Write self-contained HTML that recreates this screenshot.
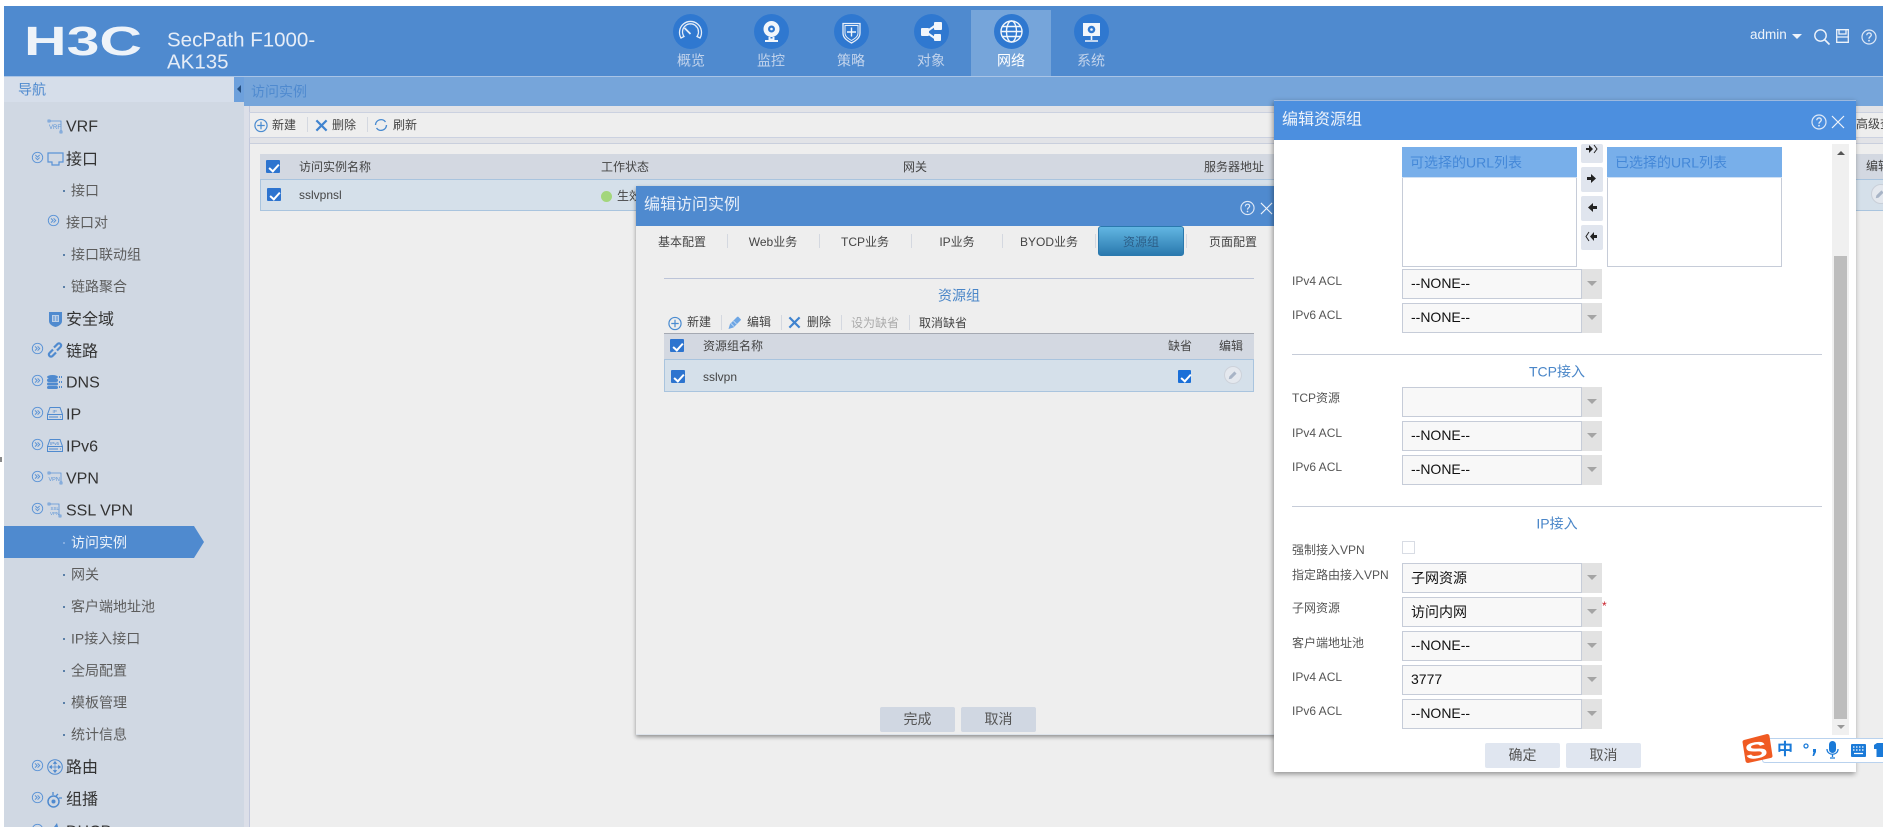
<!DOCTYPE html>
<html lang="zh">
<head>
<meta charset="utf-8">
<title>H3C SecPath F1000-AK135</title>
<style>
html,body{margin:0;padding:0;width:1883px;height:827px;overflow:hidden;background:#fff}
body{position:relative;font-family:"Liberation Sans","Noto Sans CJK SC",sans-serif;color:#555}
div,span,svg{position:absolute;box-sizing:border-box}
svg{display:block;overflow:visible}
.t{white-space:nowrap;transform:translateY(-50%);line-height:1.2}
.c{white-space:nowrap;transform:translate(-50%,-50%);line-height:1.2}
.top{font-size:16px;color:#333}
.sub{font-size:14px;color:#5c5c5c}
.dot{width:2px;height:2px;background:#5a7fa8}
.nl{font-size:14px;color:#c3d4ec}
.s12{font-size:12px;color:#444}
.sep{width:1px;background:#d4d8e0}
.cb{background:#2d74cf;border-radius:1px}
.cb:after{content:"";position:absolute;left:4.5px;top:1.5px;width:4px;height:8px;border:solid #fff;border-width:0 2px 2px 0;transform:rotate(42deg)}
.sel{left:1402px;width:200px;height:30px;background:#f8f8f8;border:1px solid #c6ccd8;border-right:0;font-size:14px;color:#111;line-height:27px;padding-left:8px}
.sel:after{content:"";position:absolute;right:0;top:-1px;width:20px;height:30px;background:#e2e2e2;border-left:1px solid #c6ccd8}
.sel:before{content:"";position:absolute;z-index:2;right:5px;top:11px;border:solid transparent;border-width:5px 5px 0;border-top-color:#a4a4a4}
.lb{left:1292px;font-size:12px;color:#555}
.btn{background:#d0d7e2;border-radius:2px;font-size:14px;color:#555;text-align:center;line-height:25px;height:25px;width:75px}
.ab{left:1581px;width:22px;background:#e0e5ee;border-radius:2px}
.tab{font-size:12px;color:#444}
</style>
</head>
<body>
<svg width="0" height="0" style="position:absolute">
<defs>
<symbol id="r" viewBox="-0.5 -0.5 14 14"><circle cx="6.5" cy="6.5" r="5.6" fill="none" stroke="#5a93d6" stroke-width="1"/><path d="M3.8 4.2l2.3 2.3-2.3 2.3M6.6 4.2l2.3 2.3-2.3 2.3" fill="none" stroke="#5a93d6"/></symbol>
<symbol id="d" viewBox="-0.5 -0.5 14 14"><circle cx="6.5" cy="6.5" r="5.6" fill="none" stroke="#5a93d6" stroke-width="1"/><path d="M4.2 3.8l2.3 2.3 2.3-2.3M4.2 6.6l2.3 2.3 2.3-2.3" fill="none" stroke="#5a93d6"/></symbol>
<symbol id="plus" viewBox="0 0 15 15"><circle cx="7.5" cy="7.5" r="6.5" fill="none" stroke="#4a8bd0" stroke-width="1.3"/><path d="M7.5 3.5v8M3.5 7.5h8" stroke="#4a8bd0" stroke-width="1.3"/></symbol>
<symbol id="x" viewBox="0 0 14 14"><path d="M1.5 1.5l11 11M12.5 1.5l-11 11" stroke="#3f83cf" stroke-width="2.4"/></symbol>
<symbol id="pen" viewBox="0 0 14 14"><path d="M.5 13.500l1.500-5L9 1.500l1-.5 3 3-.5 1-7 7z" fill="#6ea6e4"/><path d="M3 8l3 3M5.500 5.500l3 3" stroke="#cfe0f4" stroke-width=".8"/></symbol>
<symbol id="q" viewBox="0 0 16 16"><circle cx="8" cy="8" r="7" fill="none" stroke="#dfe9f7" stroke-width="1.2"/><path d="M5.8 6.2c0-3 4.5-3 4.5-.2 0 1.700-2.300 1.700-2.300 3.700" fill="none" stroke="#dfe9f7" stroke-width="1.300"/><circle cx="8" cy="11.700" r=".9" fill="#dfe9f7"/></symbol>
<symbol id="cl" viewBox="0 0 14 14"><path d="M1 1l12 12M13 1L1 13" stroke="#eef3fa" stroke-width="1.200"/></symbol>
</defs>
</svg>

<!-- page bg -->
<div style="left:4px;top:6px;width:1879px;height:821px;background:#eeeeee"></div>
<div style="left:0;top:457px;width:2px;height:5px;background:#888"></div>

<!-- header -->
<div style="left:4px;top:6px;width:1879px;height:70px;background:#4f8acf"></div>
<div style="left:4px;top:76px;width:1879px;height:1px;background:#a9c4e6"></div>
<svg style="left:24px;top:27px" width="118" height="28"><text x="0" y="28" textLength="118" lengthAdjust="spacingAndGlyphs" font-family="Liberation Sans,sans-serif" font-weight="700" font-size="41" fill="#eef3f9">H3C</text></svg>
<span class="t" style="left:167px;top:41px;font-size:20.500px;color:#e6edf7">SecPath F1000-</span>
<span class="t" style="left:167px;top:63px;font-size:20.500px;color:#e6edf7">AK135</span>

<!-- top nav -->
<div style="left:971px;top:10px;width:80px;height:66px;background:#76a5da"></div>
<div style="left:673px;top:14px;width:35px;height:35px;border-radius:50%;background:#2f78d0"></div>
<div style="left:754px;top:14px;width:35px;height:35px;border-radius:50%;background:#2f78d0"></div>
<div style="left:834px;top:14px;width:35px;height:35px;border-radius:50%;background:#2f78d0"></div>
<div style="left:914px;top:14px;width:35px;height:35px;border-radius:50%;background:#2f78d0"></div>
<div style="left:994px;top:14px;width:35px;height:35px;border-radius:50%;background:#2f78d0"></div>
<div style="left:1074px;top:14px;width:35px;height:35px;border-radius:50%;background:#2f78d0"></div>
<svg style="left:673px;top:14px" width="35" height="35" viewBox="0 0 35 35"><path d="M8 24a11 11 0 1 1 19 0l-3-1.500a8 8 0 1 0-13 0z" fill="none" stroke="#e5edf8" stroke-width="1.300"/><path d="M17.500 20l-6-6" stroke="#e5edf8" stroke-width="1.800"/><path d="M13 13h.1M17.500 11h.1M22 13h.1M24 17h.1M11 17h.1" stroke="#e5edf8" stroke-width="2"/></svg>
<svg style="left:754px;top:14px" width="35" height="35" viewBox="0 0 35 35"><circle cx="17.500" cy="15" r="8" fill="#f2f6fb"/><circle cx="17.500" cy="15" r="3.500" fill="#2f78d0"/><circle cx="17.500" cy="15" r="1.300" fill="#f2f6fb"/><path d="M15.500 23v2.500h4V23M11 27h13" stroke="#f2f6fb" stroke-width="2" fill="none"/></svg>
<svg style="left:834px;top:14px" width="35" height="35" viewBox="0 0 35 35"><path d="M9 9.500h17v9.500c0 5-4 7.500-8.500 10C13 26.500 9 24 9 19z" fill="none" stroke="#e8eff9" stroke-width="1.300"/><path d="M11 11.500h13v7.500c0 3.500-3 5.500-6.500 7.500C14 24.500 11 22.500 11 19z" fill="#2f78d0" stroke="#e8eff9"/><path d="M17.500 13.500v9M13 18h9" stroke="#f2f6fb" stroke-width="1.400"/></svg>
<svg style="left:914px;top:14px" width="35" height="35" viewBox="0 0 35 35"><path d="M12 18l10-7M12 18l10 7" stroke="#f2f6fb" stroke-width="2"/><rect x="7" y="14" width="8" height="8" rx="1" fill="#f2f6fb"/><rect x="20" y="8" width="8" height="8" rx="1" fill="#f2f6fb"/><rect x="20" y="20" width="7" height="7" rx="1" fill="#f2f6fb"/></svg>
<svg style="left:994px;top:14px" width="35" height="35" viewBox="0 0 35 35"><g fill="none" stroke="#f2f6fb" stroke-width="1.400"><circle cx="17.500" cy="17.500" r="10.500"/><ellipse cx="17.500" cy="17.500" rx="5" ry="10.500"/><path d="M7 17.500h21M8.500 12.500h18M8.500 22.500h18"/></g></svg>
<svg style="left:1074px;top:14px" width="35" height="35" viewBox="0 0 35 35"><rect x="9" y="9" width="17" height="13" fill="#f2f6fb"/><circle cx="17.500" cy="15.500" r="3.800" fill="#2f78d0"/><circle cx="17.500" cy="15.500" r="1.300" fill="#f2f6fb"/><path d="M17.500 22v4M11 27h13" stroke="#f2f6fb" stroke-width="1.600"/></svg>
<span class="c nl" style="left:691px;top:61px">概览</span>
<span class="c nl" style="left:771px;top:61px">监控</span>
<span class="c nl" style="left:851px;top:61px">策略</span>
<span class="c nl" style="left:931px;top:61px">对象</span>
<span class="c nl" style="left:1011px;top:61px;color:#fff">网络</span>
<span class="c nl" style="left:1091px;top:61px">系统</span>

<!-- top right -->
<span class="t" style="left:1750px;top:35px;font-size:13.500px;color:#eef3fa">admin</span>
<div style="left:1792px;top:34px;width:0;height:0;border:solid transparent;border-width:5px 5px 0;border-top-color:#eef3fa"></div>
<svg style="left:1813px;top:28px" width="18" height="17" viewBox="0 0 18 17"><circle cx="7.500" cy="7.500" r="5.700" fill="none" stroke="#eef3fa" stroke-width="1.400"/><path d="M11.500 11.500l5 5" stroke="#eef3fa" stroke-width="1.600"/></svg>
<svg style="left:1836px;top:29px" width="13" height="14" viewBox="0 0 13 14"><path d="M.7.700h11.600v12.600H.7z" fill="none" stroke="#eef3fa" stroke-width="1.300"/><path d="M3 1v4h7V1M1 8h11" stroke="#eef3fa" stroke-width="1.300" fill="none"/></svg>
<svg style="left:1861px;top:29px" width="16" height="16"><use href="#q" width="16" height="16"/></svg>

<!-- sidebar -->
<div style="left:4px;top:77px;width:240px;height:750px;background:#d0d8e3"></div>
<div style="left:4px;top:77px;width:240px;height:25px;background:#d6deea"></div>
<div style="left:244px;top:77px;width:5px;height:750px;background:#dcdfe8"></div>
<div style="left:249px;top:77px;width:1px;height:750px;background:#c2c8dc"></div>
<div style="left:234px;top:77px;width:10px;height:25px;background:#6da0dc"></div>
<div style="left:237px;top:85px;width:0;height:0;border:solid transparent;border-width:4px 4px 4px 0;border-right-color:#244e80"></div>
<span class="t" style="left:18px;top:90px;font-size:14px;color:#4f8acf">导航</span>

<svg style="left:47px;top:119px" width="16" height="15" viewBox="0 0 16 15"><path d="M1 1h2v2H1zM3 2h11v10M13 12h2v2h-2z" fill="none" stroke="#5a93d6" stroke-width=".8"/><text x="2" y="10" font-size="6" fill="#5a93d6" font-family="Liberation Sans,sans-serif">VRF</text></svg>
<span class="t top" style="left:66px;top:127px">VRF</span>

<svg style="left:31px;top:151px" width="13" height="13"><use href="#d" width="13" height="13"/></svg>
<svg style="left:47px;top:152px" width="17" height="15" viewBox="0 0 17 15"><path d="M1 1h15v9h-4v3H5v-3H1z" fill="none" stroke="#5a93d6" stroke-width="1.200"/></svg>
<span class="t top" style="left:66px;top:160px">接口</span>

<div class="dot" style="left:63px;top:190px"></div>
<span class="t sub" style="left:71px;top:191px">接口</span>
<svg style="left:47px;top:214px" width="13" height="13"><use href="#r" width="13" height="13"/></svg>
<span class="t sub" style="left:66px;top:223px">接口对</span>
<div class="dot" style="left:63px;top:254px"></div>
<span class="t sub" style="left:71px;top:255px">接口联动组</span>
<div class="dot" style="left:63px;top:286px"></div>
<span class="t sub" style="left:71px;top:287px">链路聚合</span>

<svg style="left:49px;top:311px" width="13" height="16" viewBox="0 0 13 16"><path d="M0 1h13v9c0 3-3 5-6.500 6C3 15 0 13 0 10z" fill="#4f8acf"/><rect x="3" y="4" width="7" height="7" fill="#bcd0e8"/><path d="M5 5v5M8 5v5" stroke="#4f8acf"/></svg>
<span class="t top" style="left:66px;top:320px">安全域</span>

<svg style="left:31px;top:342px" width="13" height="13"><use href="#r" width="13" height="13"/></svg>
<svg style="left:47px;top:342px" width="16" height="16" viewBox="0 0 16 16"><g fill="none" stroke="#4f8acf" stroke-width="2.200"><path d="M6 7.500l-3.500 3.500a2.100 2.100 0 0 0 3 3L9 10.500"/><path d="M10 8.500l3.500-3.500a2.100 2.100 0 0 0-3-3L7 5.500"/></g></svg>
<span class="t top" style="left:66px;top:352px">链路</span>

<svg style="left:31px;top:374px" width="13" height="13"><use href="#r" width="13" height="13"/></svg>
<svg style="left:47px;top:375px" width="16" height="14" viewBox="0 0 16 14"><g fill="#4f8acf"><ellipse cx="5.500" cy="2" rx="5.500" ry="2"/><rect y="3.500" width="11" height="3.500" rx="1.800"/><rect y="7.500" width="11" height="3" rx="1.500"/><rect y="11" width="11" height="3" rx="1.500"/><path d="M12 1h1v2h-1zM14 1h1v2h-1zM12 6h1v2h-1zM14 6h1v2h-1zM12 11h1v2h-1zM14 11h1v2h-1z"/></g></svg>
<span class="t top" style="left:66px;top:383px">DNS</span>

<svg style="left:31px;top:406px" width="13" height="13"><use href="#r" width="13" height="13"/></svg>
<svg style="left:47px;top:407px" width="16" height="13" viewBox="0 0 16 13"><path d="M3 .5h10l2.500 7v5H.5v-5zM.5 7.500h15" fill="none" stroke="#4f8acf"/><path d="M2 10h9M13 10h1" stroke="#4f8acf"/><text x="5.500" y="6" font-size="4.500" fill="#4f8acf" font-family="Liberation Sans,sans-serif">IP</text></svg>
<span class="t top" style="left:66px;top:415px">IP</span>

<svg style="left:31px;top:438px" width="13" height="13"><use href="#r" width="13" height="13"/></svg>
<svg style="left:47px;top:439px" width="16" height="13" viewBox="0 0 16 13"><path d="M3 .5h10l2.500 7v5H.5v-5zM.5 7.500h15" fill="none" stroke="#4f8acf"/><path d="M2 10h9M13 10h1" stroke="#4f8acf"/><text x="3" y="6" font-size="4.500" fill="#4f8acf" font-family="Liberation Sans,sans-serif">IPv6</text></svg>
<span class="t top" style="left:66px;top:447px">IPv6</span>

<svg style="left:31px;top:470px" width="13" height="13"><use href="#r" width="13" height="13"/></svg>
<svg style="left:47px;top:471px" width="16" height="14" viewBox="0 0 16 14"><path d="M1 1h2v2H1zM3 2h11v9M13 11h2v2h-2z" fill="none" stroke="#5a93d6" stroke-width=".8"/><text x="1.500" y="10" font-size="5.500" fill="#5a93d6" font-family="Liberation Sans,sans-serif">VPN</text></svg>
<span class="t top" style="left:66px;top:479px">VPN</span>

<svg style="left:31px;top:502px" width="13" height="13"><use href="#d" width="13" height="13"/></svg>
<svg style="left:47px;top:502px" width="16" height="16" viewBox="0 0 16 16"><path d="M1 1h2v2H1zM3 2h9v11M12 13h2v2h-2z" fill="none" stroke="#5a93d6" stroke-width=".8"/><text x="3.500" y="8" font-size="4.500" fill="#5a93d6" font-family="Liberation Sans,sans-serif">SSL</text><text x="3" y="13" font-size="4.500" fill="#5a93d6" font-family="Liberation Sans,sans-serif">VPN</text></svg>
<span class="t top" style="left:66px;top:511px">SSL VPN</span>

<svg style="left:4px;top:526px" width="200" height="32"><path d="M0 0h190l10 16-10 16H0z" fill="#4f8acf"/></svg>
<div class="dot" style="left:63px;top:542px;background:#82abe0"></div>
<span class="t sub" style="left:71px;top:543px;color:#eef3fa">访问实例</span>

<div class="dot" style="left:63px;top:574px"></div>
<span class="t sub" style="left:71px;top:575px">网关</span>
<div class="dot" style="left:63px;top:606px"></div>
<span class="t sub" style="left:71px;top:607px">客户端地址池</span>
<div class="dot" style="left:63px;top:638px"></div>
<span class="t sub" style="left:71px;top:639px">IP接入接口</span>
<div class="dot" style="left:63px;top:670px"></div>
<span class="t sub" style="left:71px;top:671px">全局配置</span>
<div class="dot" style="left:63px;top:702px"></div>
<span class="t sub" style="left:71px;top:703px">模板管理</span>
<div class="dot" style="left:63px;top:734px"></div>
<span class="t sub" style="left:71px;top:735px">统计信息</span>

<svg style="left:31px;top:759px" width="13" height="13"><use href="#r" width="13" height="13"/></svg>
<svg style="left:47px;top:759px" width="16" height="16" viewBox="0 0 16 16"><circle cx="8" cy="8" r="7.300" fill="none" stroke="#4f8acf"/><path d="M8 3v10M3 8h10M8 2.500l-1.500 2h3zM8 13.500l-1.500-2h3zM2.500 8l2-1.500v3zM13.500 8l-2-1.500v3z" stroke="#4f8acf" fill="#4f8acf" stroke-width=".7"/></svg>
<span class="t top" style="left:66px;top:768px">路由</span>

<svg style="left:31px;top:791px" width="13" height="13"><use href="#r" width="13" height="13"/></svg>
<svg style="left:47px;top:791px" width="16" height="17" viewBox="0 0 16 17"><circle cx="6.500" cy="10.500" r="5.500" fill="none" stroke="#4f8acf" stroke-width="1.500"/><circle cx="6.500" cy="10.500" r="2" fill="#4f8acf"/><path d="M6 1v3M11 3l-2 2M15 7h-3" stroke="#4f8acf" stroke-width="1.300"/></svg>
<span class="t top" style="left:66px;top:800px">组播</span>

<svg style="left:31px;top:823px" width="13" height="13"><use href="#r" width="13" height="13"/></svg>
<svg style="left:50px;top:823px" width="10" height="14" viewBox="0 0 10 14"><path d="M7 0L1 8h8z" fill="#4f8acf"/></svg>
<span class="t top" style="left:66px;top:832px">DHCP</span>

<!-- breadcrumb -->
<div style="left:244px;top:77px;width:1639px;height:29px;background:#76a5da"></div>
<span class="t" style="left:251px;top:92px;font-size:14px;color:#4f8acf">访问实例</span>
<div style="left:250px;top:106px;width:1633px;height:37px;background:#e2e3e7"></div>

<!-- toolbar -->
<div style="left:249px;top:112px;width:1634px;height:26px;background:#eeeeee;border:1px solid #cbd1e0;border-right:0"></div>
<svg style="left:254px;top:118px" width="14" height="15"><use href="#plus" width="14" height="15"/></svg>
<span class="t s12" style="left:272px;top:125px">新建</span>
<div class="sep" style="left:307px;top:117px;height:15px"></div>
<svg style="left:315px;top:119px" width="13" height="13"><use href="#x" width="13" height="13"/></svg>
<span class="t s12" style="left:332px;top:125px">删除</span>
<div class="sep" style="left:367px;top:117px;height:15px"></div>
<svg style="left:374px;top:118px" width="14" height="14" viewBox="0 0 14 14"><path d="M1.500 7a5.500 5.500 0 0 1 10-3M12.500 7a5.500 5.500 0 0 1-10 3" fill="none" stroke="#4a8bd0" stroke-width="1.400"/></svg>
<span class="t s12" style="left:393px;top:125px">刷新</span>

<!-- list panel -->
<div style="left:250px;top:143px;width:1633px;height:684px;background:#eeeeee;border-top:1px solid #c9cfdd"></div>
<div style="left:260px;top:154px;width:1623px;height:25px;background:#d3d8e1"></div>
<div style="left:260px;top:179px;width:1623px;height:32px;background:#d5e0ea;border:1px solid #a9c4de;border-right:0"></div>
<div class="cb" style="left:266px;top:160px;width:14px;height:13px"></div>
<div class="cb" style="left:267px;top:188px;width:14px;height:13px"></div>
<span class="t s12" style="left:299px;top:167px">访问实例名称</span>
<span class="t s12" style="left:601px;top:167px">工作状态</span>
<span class="t s12" style="left:903px;top:167px">网关</span>
<span class="t s12" style="left:1204px;top:167px">服务器地址</span>
<span class="t s12" style="left:299px;top:195px">sslvpnsl</span>
<div style="left:601px;top:191px;width:11px;height:11px;border-radius:50%;background:#a3d67c"></div>
<span class="t s12" style="left:617px;top:196px">生效</span>
<span class="t s12" style="left:1866px;top:166px">编辑</span>
<span class="t s12" style="left:1856px;top:124px">高级查询</span>
<div style="left:1871px;top:184px;width:20px;height:20px;border-radius:50%;background:#e4e8ee;border:1px solid #c9cfd8"></div>
<svg style="left:1875px;top:189px" width="10" height="10" viewBox="0 0 14 14"><path d="M1 13l1-4 7-7 3 3-7 7z" fill="#a8b4c6"/></svg>

<!-- modal 1 -->
<div style="left:636px;top:186px;width:640px;height:549px;background:#eeeeee;border-bottom:1px solid #dde3ea;box-shadow:0 2px 4px rgba(0,0,0,.4)"></div>
<div style="left:636px;top:186px;width:640px;height:40px;background:#4f8acf"></div>
<span class="t" style="left:644px;top:205px;font-size:16px;color:#e8eff9">编辑访问实例</span>
<svg style="left:1240px;top:200px" width="15" height="16"><use href="#q" width="15" height="16"/></svg>
<svg style="left:1260px;top:202px" width="13" height="13"><use href="#cl" width="13" height="13"/></svg>

<span class="c tab" style="left:682px;top:242px">基本配置</span>
<span class="c tab" style="left:773px;top:242px">Web业务</span>
<span class="c tab" style="left:865px;top:242px">TCP业务</span>
<span class="c tab" style="left:957px;top:242px">IP业务</span>
<span class="c tab" style="left:1049px;top:242px">BYOD业务</span>
<div style="left:1098px;top:226px;width:86px;height:30px;border-radius:3px;background:linear-gradient(#62b6e2,#2a79ae);border:1px solid #2a79ae"></div>
<span class="c tab" style="left:1141px;top:242px;color:#2d5f88">资源组</span>
<span class="c tab" style="left:1233px;top:242px">页面配置</span>
<div class="sep" style="left:727px;top:234px;height:14px"></div>
<div class="sep" style="left:819px;top:234px;height:14px"></div>
<div class="sep" style="left:911px;top:234px;height:14px"></div>
<div class="sep" style="left:1002px;top:234px;height:14px"></div>
<div class="sep" style="left:1095px;top:234px;height:14px"></div>
<div class="sep" style="left:1186px;top:234px;height:14px"></div>

<div style="left:664px;top:278px;width:590px;height:1px;background:#bcc4d8"></div>
<span class="c" style="left:959px;top:296px;font-size:14px;color:#4a86c8">资源组</span>

<svg style="left:668px;top:316px" width="14" height="15"><use href="#plus" width="14" height="15"/></svg>
<span class="t s12" style="left:687px;top:322px">新建</span>
<div class="sep" style="left:721px;top:315px;height:15px"></div>
<svg style="left:728px;top:315px" width="14" height="15"><use href="#pen" width="14" height="15"/></svg>
<span class="t s12" style="left:747px;top:322px">编辑</span>
<div class="sep" style="left:781px;top:315px;height:15px"></div>
<svg style="left:788px;top:316px" width="13" height="13"><use href="#x" width="13" height="13"/></svg>
<span class="t s12" style="left:807px;top:322px">删除</span>
<div class="sep" style="left:841px;top:315px;height:15px"></div>
<span class="t s12" style="left:851px;top:323px;color:#ababab">设为缺省</span>
<div class="sep" style="left:909px;top:315px;height:15px"></div>
<span class="t s12" style="left:919px;top:323px">取消缺省</span>

<div style="left:664px;top:333px;width:590px;height:26px;background:#d3d8e1;border-top:1px solid #a5a9b2"></div>
<div style="left:664px;top:359px;width:590px;height:33px;background:#d5e0ea;border:1px solid #a9c4de"></div>
<div class="cb" style="left:670px;top:339px;width:14px;height:13px"></div>
<div class="cb" style="left:671px;top:370px;width:14px;height:13px"></div>
<span class="t s12" style="left:703px;top:346px">资源组名称</span>
<span class="t s12" style="left:1168px;top:346px">缺省</span>
<span class="t s12" style="left:1219px;top:346px">编辑</span>
<span class="t s12" style="left:703px;top:377px">sslvpn</span>
<div class="cb" style="left:1178px;top:370px;width:13px;height:13px;background:#1a6fd8"></div>
<div style="left:1224px;top:366px;width:18px;height:18px;border-radius:50%;background:#e4e8ee;border:1px solid #cdd2da"></div>
<svg style="left:1228px;top:370px" width="10" height="10" viewBox="0 0 14 14"><path d="M1 13l1-4 7-7 3 3-7 7z" fill="#a8b4c6"/></svg>

<div class="btn" style="left:880px;top:707px">完成</div>
<div class="btn" style="left:961px;top:707px">取消</div>

<!-- modal 2 -->
<div style="left:1274px;top:100px;width:582px;height:672px;background:#fff;box-shadow:-1px 2px 5px rgba(0,0,0,.4)"></div>
<div style="left:1274px;top:100px;width:582px;height:1px;background:#9db9de"></div>
<div style="left:1274px;top:101px;width:582px;height:39px;background:#4c8fdf"></div>
<span class="t" style="left:1282px;top:120px;font-size:16px;color:#eef3fa">编辑资源组</span>
<svg style="left:1811px;top:114px" width="16" height="16"><use href="#q" width="16" height="16"/></svg>
<svg style="left:1831px;top:115px" width="14" height="14"><use href="#cl" width="14" height="14"/></svg>

<!-- scrollbar -->
<div style="left:1832px;top:144px;width:17px;height:591px;background:#f0f0f0"></div>
<div style="left:1834px;top:256px;width:13px;height:463px;background:#bdbdbd"></div>
<div style="left:1837px;top:151px;width:0;height:0;border:solid transparent;border-width:0 4px 4px;border-bottom-color:#555"></div>
<div style="left:1837px;top:725px;width:0;height:0;border:solid transparent;border-width:4px 4px 0;border-top-color:#999"></div>

<!-- lists -->
<div style="left:1402px;top:147px;width:175px;height:120px;background:#fff;border:1px solid #c6ccd8"></div>
<div style="left:1402px;top:147px;width:175px;height:31px;background:#78afea;border-bottom:1px solid #cfe0f4"></div>
<span class="t" style="left:1410px;top:163px;font-size:14px;color:#4488d8">可选择的URL列表</span>
<div style="left:1607px;top:147px;width:175px;height:120px;background:#fff;border:1px solid #c6ccd8"></div>
<div style="left:1607px;top:147px;width:175px;height:31px;background:#78afea;border-bottom:1px solid #cfe0f4"></div>
<span class="t" style="left:1615px;top:163px;font-size:14px;color:#4488d8">已选择的URL列表</span>

<div class="ab" style="top:144px;height:19px"></div>
<div class="ab" style="top:167px;height:25px"></div>
<div class="ab" style="top:196px;height:25px"></div>
<div class="ab" style="top:225px;height:25px"></div>
<svg style="left:1586px;top:144px" width="12" height="106" viewBox="0 0 12 106"><g fill="#222"><path d="M0 4h3V1l4 4-4 4V6H0z"/><path d="M8 1l3 4-3 4" fill="none" stroke="#222"/><path d="M1 33h4v-3l5 4.500-5 4.500v-3H1z"/><path d="M11 62H7v-3l-5 4.500L7 68v-3h4z"/><path d="M11 91H8v-3l-4 4.500L8 97v-3h3z"/><path d="M3 88l-3 4.500L3 97" fill="none" stroke="#222"/></g></svg>

<!-- form -->
<span class="t lb" style="top:281px">IPv4 ACL</span>
<div class="sel" style="top:269px">--NONE--</div>
<span class="t lb" style="top:315px">IPv6 ACL</span>
<div class="sel" style="top:303px">--NONE--</div>

<div style="left:1292px;top:354px;width:530px;height:1px;background:#c6ccd8"></div>
<span class="c" style="left:1557px;top:372px;font-size:14px;color:#4a86c8">TCP接入</span>
<span class="t lb" style="top:398px">TCP资源</span>
<div class="sel" style="top:387px"></div>
<span class="t lb" style="top:433px">IPv4 ACL</span>
<div class="sel" style="top:421px">--NONE--</div>
<span class="t lb" style="top:467px">IPv6 ACL</span>
<div class="sel" style="top:455px">--NONE--</div>

<div style="left:1292px;top:506px;width:530px;height:1px;background:#c6ccd8"></div>
<span class="c" style="left:1557px;top:524px;font-size:14px;color:#4a86c8">IP接入</span>
<span class="t lb" style="top:550px">强制接入VPN</span>
<div style="left:1402px;top:541px;width:13px;height:13px;background:#fff;border:1px solid #d8dce4"></div>
<span class="t lb" style="top:575px">指定路由接入VPN</span>
<div class="sel" style="top:563px;line-height:28px">子网资源</div>
<span class="t lb" style="top:608px">子网资源</span>
<div class="sel" style="top:597px;line-height:28px">访问内网</div>
<span class="t" style="left:1602px;top:606px;font-size:12px;color:#c8202a">*</span>
<span class="t lb" style="top:643px">客户端地址池</span>
<div class="sel" style="top:631px">--NONE--</div>
<span class="t lb" style="top:677px">IPv4 ACL</span>
<div class="sel" style="top:665px">3777</div>
<span class="t lb" style="top:711px">IPv6 ACL</span>
<div class="sel" style="top:699px">--NONE--</div>

<div class="btn" style="left:1485px;top:743px;background:#e0e6f0">确定</div>
<div class="btn" style="left:1566px;top:743px;background:#e0e6f0">取消</div>

<!-- IME -->
<div style="left:1762px;top:738px;width:121px;height:25px;background:#fff;border:1px solid #b9d2ee;border-right:0;border-radius:3px 0 0 3px"></div>
<svg style="left:1741px;top:733px" width="32" height="31" viewBox="0 0 32 31"><path d="M3 7L26 1q2 0 2.500 2l3 20q0 1.500-2 2L7 30q-2 0-2.500-2L1.500 9q0-1.500 1.500-2z" fill="#f05a22"/><text x="0" y="0" text-anchor="middle" font-size="27" font-weight="700" fill="#fff" font-family="Liberation Sans,sans-serif" transform="translate(16.500 25) rotate(-10) scale(1.250 .85)">S</text></svg>
<span class="c" style="left:1785px;top:750px;font-size:16px;font-weight:700;color:#1a7ad8">中</span>
<svg style="left:1803px;top:741px" width="14" height="18" viewBox="0 0 14 18"><circle cx="3" cy="5" r="2" fill="none" stroke="#1a7ad8" stroke-width="1.300"/><path d="M10 8h3v3l-2 4h-1.500l1-4H10z" fill="#1a7ad8"/></svg>
<svg style="left:1826px;top:741px" width="13" height="19" viewBox="0 0 13 19"><rect x="3" y="0" width="7" height="12" rx="3.500" fill="#1a7ad8"/><path d="M1 8c0 7 11 7 11 0M6.500 13v3M4 17h5" fill="none" stroke="#1a7ad8" stroke-width="1.300"/></svg>
<svg style="left:1851px;top:744px" width="15" height="13" viewBox="0 0 15 13"><rect width="15" height="13" rx="1" fill="#1a7ad8"/><path d="M2 3h1.500M5 3h1.500M8 3h1.500M11 3h1.500M2 6h1.500M5 6h1.500M8 6h1.500M11 6h1.500M3 9.500h9" stroke="#fff" stroke-width="1.300"/></svg>
<svg style="left:1874px;top:743px" width="12" height="14" viewBox="0 0 12 14"><path d="M0 2l3-2h6l3 2v4H9.500v8h-7V6H0z" fill="#1a7ad8"/></svg>
</body>
</html>
